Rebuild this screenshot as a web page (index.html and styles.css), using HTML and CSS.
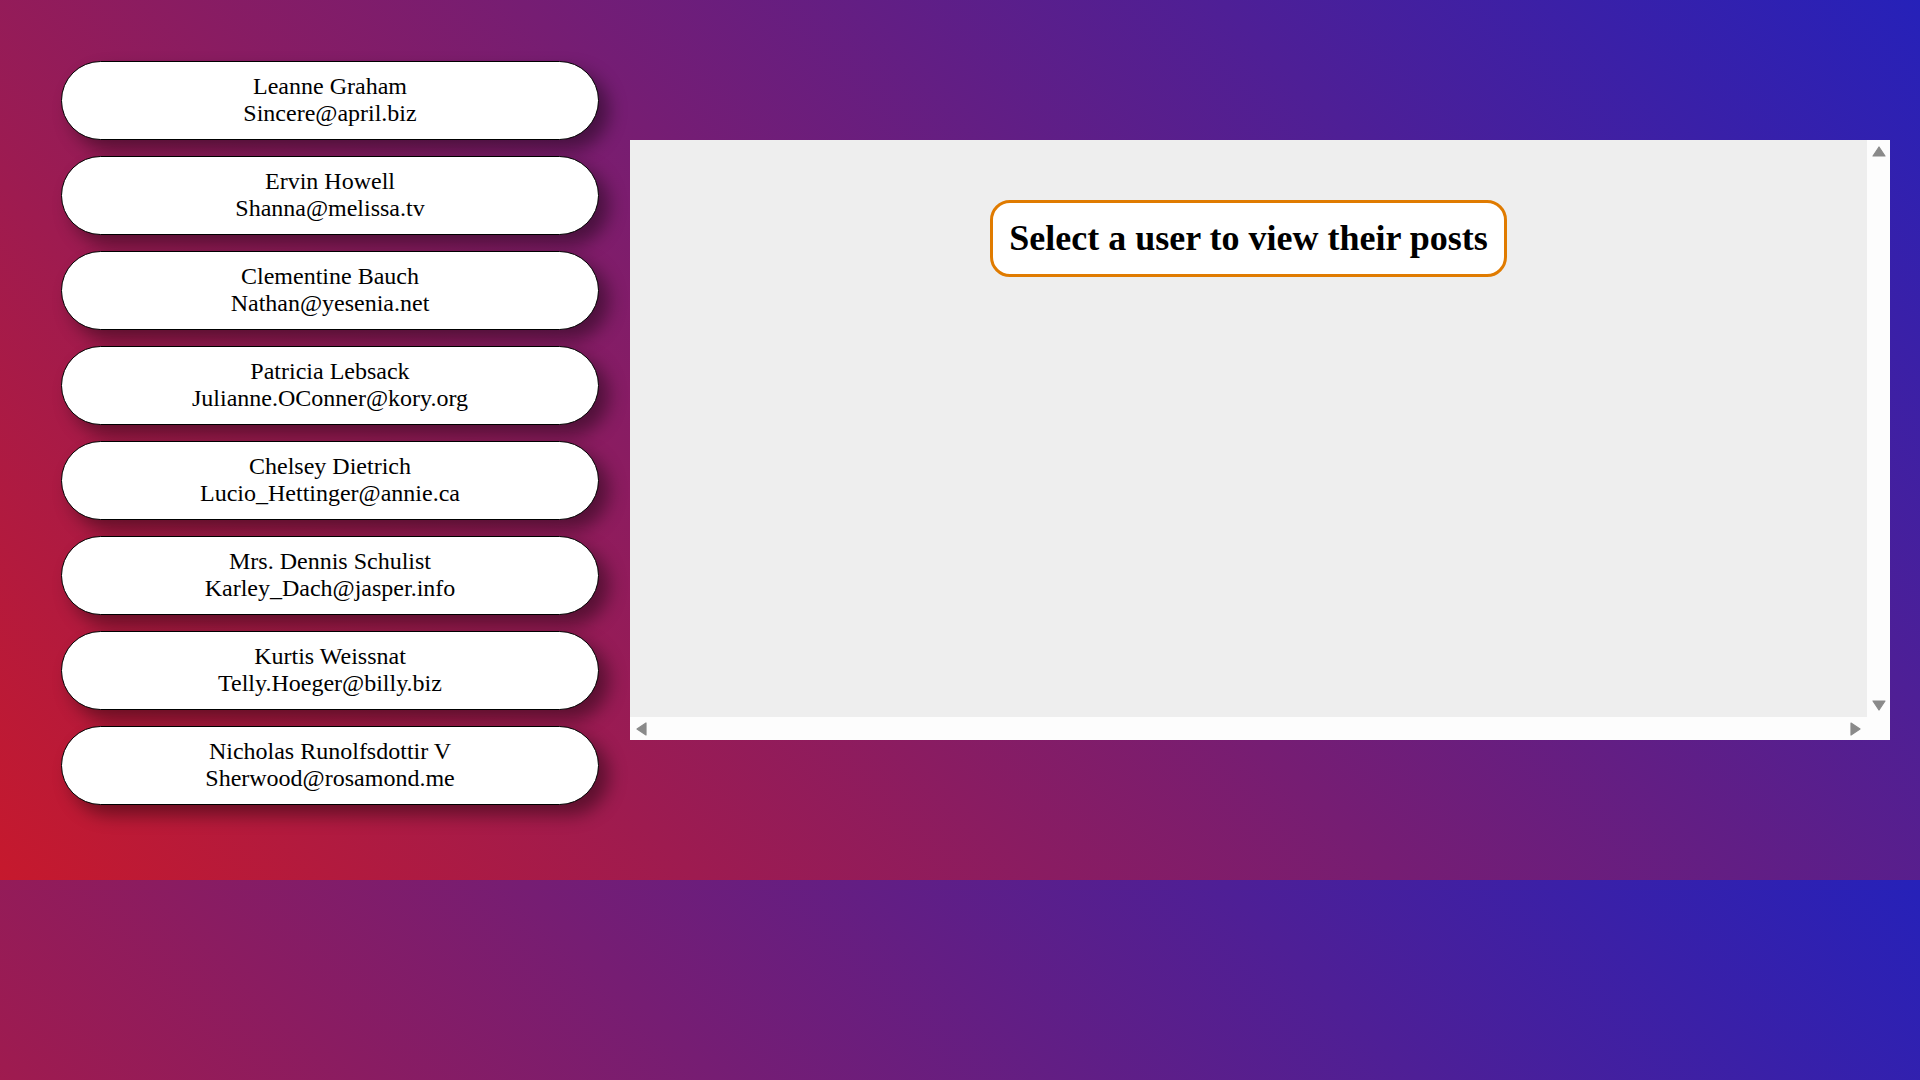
FILE: index.html
```html
<!DOCTYPE html>
<html lang="en">
<head>
<meta charset="utf-8">
<title>Users</title>
<link rel="stylesheet" href="styles.css">
</head>
<body>
<div class="app">
  <div class="users">
    <div class="user"><span class="line">Leanne Graham</span><span class="line">Sincere@april.biz</span></div>
    <div class="user"><span class="line">Ervin Howell</span><span class="line">Shanna@melissa.tv</span></div>
    <div class="user"><span class="line">Clementine Bauch</span><span class="line">Nathan@yesenia.net</span></div>
    <div class="user"><span class="line">Patricia Lebsack</span><span class="line">Julianne.OConner@kory.org</span></div>
    <div class="user"><span class="line">Chelsey Dietrich</span><span class="line">Lucio_Hettinger@annie.ca</span></div>
    <div class="user"><span class="line">Mrs. Dennis Schulist</span><span class="line">Karley_Dach@jasper.info</span></div>
    <div class="user"><span class="line">Kurtis Weissnat</span><span class="line">Telly.Hoeger@billy.biz</span></div>
    <div class="user"><span class="line">Nicholas Runolfsdottir V</span><span class="line">Sherwood@rosamond.me</span></div>
  </div>
  <div class="panel">
    <div class="content">
      <h1 class="prompt">Select a user to view their posts</h1>
    </div>
    <div class="vbar">
      <div class="btn"><svg width="14" height="11" viewBox="0 0 14 11"><polygon points="7,1 13,10 1,10" fill="#8a8a8a" stroke="#8a8a8a" stroke-width="1.2" stroke-linejoin="round"/></svg></div>
      <div class="btn"><svg width="14" height="11" viewBox="0 0 14 11"><polygon points="1,1 13,1 7,10" fill="#8a8a8a" stroke="#8a8a8a" stroke-width="1.2" stroke-linejoin="round"/></svg></div>
    </div>
    <div class="hbar">
      <div class="btn"><svg width="11" height="14" viewBox="0 0 11 14"><polygon points="1,7 10,1 10,13" fill="#8a8a8a" stroke="#8a8a8a" stroke-width="1.2" stroke-linejoin="round"/></svg></div>
      <div class="btn"><svg width="11" height="14" viewBox="0 0 11 14"><polygon points="1,1 10,7 1,13" fill="#8a8a8a" stroke="#8a8a8a" stroke-width="1.2" stroke-linejoin="round"/></svg></div>
    </div>
    <div class="corner"></div>
  </div>
</div>
</body>
</html>
```
FILE: styles.css
```css
html {
  margin: 0;
}
body {
  margin: 0;
  background: linear-gradient(45deg, #c6192d, #2621b9);
  font-family: "Liberation Serif", "Times New Roman", serif;
  color: #000;
}
.app {
  display: flex;
  align-items: flex-start;
  height: 880px;
  padding-left: 61px;
  box-sizing: border-box;
}
.users {
  display: flex;
  flex-direction: column;
  gap: 16.2px;
  width: 538px;
  padding-top: 61px;
}
.user {
  background: #fff;
  border: 1px solid #000;
  border-radius: 40px;
  padding: 10.8px 0;
  text-align: center;
  font-size: 24px;
  line-height: 27.6px;
  box-shadow: 10px 10px 18px rgba(0, 0, 0, 0.42);
}
.line {
  display: block;
}
.panel {
  margin-left: 31px;
  margin-top: 140px;
  width: 1260px;
  height: 600px;
  display: grid;
  grid-template-columns: 1fr 23px;
  grid-template-rows: 1fr 23px;
  background: #fdfdfd;
}
.content {
  background: #eeeeee;
  padding-top: 60px;
}
.prompt {
  width: fit-content;
  margin: 0 auto;
  padding: 15px 16px;
  background: #fff;
  border: 3px solid #e07b00;
  border-radius: 20px;
  font-size: 36px;
  font-weight: bold;
  line-height: 41.4px;
}
.vbar {
  display: flex;
  flex-direction: column;
  justify-content: space-between;
}
.hbar {
  display: flex;
  justify-content: space-between;
}
.btn {
  width: 23px;
  height: 23px;
  display: flex;
  align-items: center;
  justify-content: center;
}
.btn svg {
  display: block;
}
```
